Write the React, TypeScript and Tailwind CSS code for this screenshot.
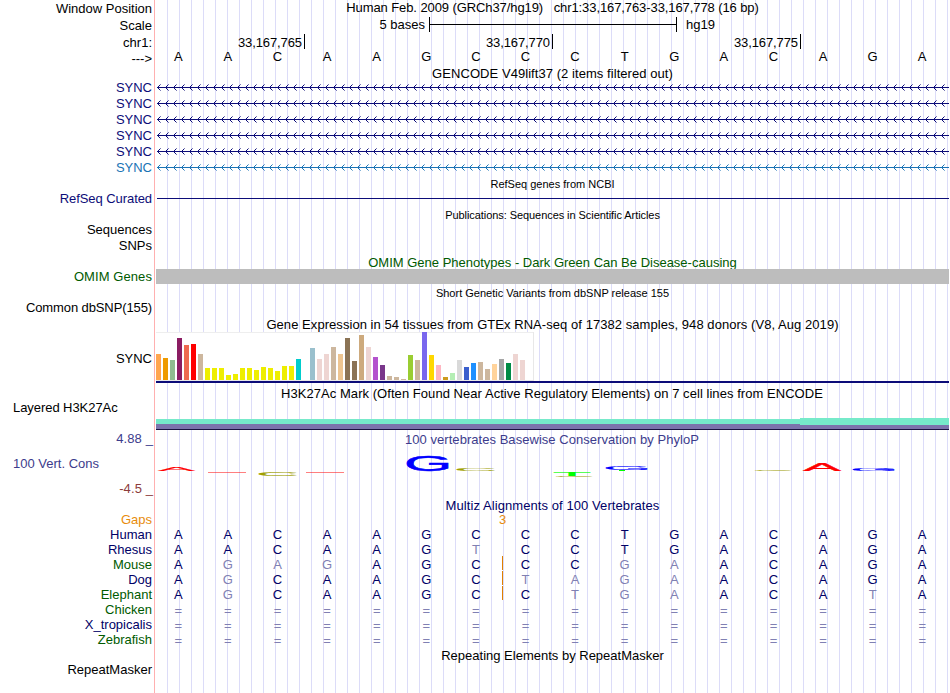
import React from 'react';

const TISSUES: [number, string][] = [
  [26, '#ffa54f'], [22, '#ee9a00'], [20, '#8fbc8f'], [42, '#8b1c62'], [35, '#ee6a50'], [36, '#ff0000'],
  [26, '#cdb79e'], [12, '#eeee00'], [12, '#eeee00'], [12, '#eeee00'], [5, '#eeee00'], [6, '#eeee00'],
  [12, '#eeee00'], [12, '#eeee00'], [10, '#eeee00'], [13, '#eeee00'], [12, '#eeee00'], [9, '#eeee00'],
  [14, '#eeee00'], [14, '#eeee00'], [21, '#00cdcd'], [0, '#ee82ee'], [32, '#9ac0cd'], [21, '#eed5d2'],
  [26, '#eed5d2'], [33, '#cdb79e'], [26, '#eec591'], [42, '#8b7355'], [19, '#8b7355'], [45, '#cdaa7d'],
  [33, '#eed5d2'], [23, '#b452cd'], [15, '#7a378b'], [4, '#cdb79e'], [3, '#cdb79e'], [1, '#cdb79e'],
  [25, '#9acd32'], [20, '#cdb79e'], [48, '#7a67ee'], [25, '#ffd700'], [15, '#ffb6c1'], [3, '#cd9b1d'],
  [7, '#b4eeb4'], [20, '#d9d9d9'], [13, '#3a5fcd'], [17, '#1e90ff'], [18, '#cdb79e'], [11, '#cdb79e'],
  [16, '#ffd39b'], [21, '#a6a6a6'], [17, '#008b45'], [26, '#eed5d2'], [20, '#eed5d2'], [0, '#ff00ff'],
];

// lower case = differs from human, drawn faded
const SPECIES = [
  { name: 'Human', color: 'text-[#000066]', seq: 'AACAAGCCCTGACAGA', gap: false },
  { name: 'Rhesus', color: 'text-[#000066]', seq: 'AACAAGtCCTGACAGA', gap: false },
  { name: 'Mouse', color: 'text-[#005a00]', seq: 'AgagAGCCCgaACAGA', gap: true },
  { name: 'Dog', color: 'text-[#000066]', seq: 'AgCAAGCtagaACAGA', gap: true },
  { name: 'Elephant', color: 'text-[#005a00]', seq: 'AgCAAGCCtgaACAtA', gap: true },
  { name: 'Chicken', color: 'text-[#005a00]', seq: '================', gap: false },
  { name: 'X_tropicalis', color: 'text-[#000066]', seq: '================', gap: false },
  { name: 'Zebrafish', color: 'text-[#005a00]', seq: '================', gap: false },
];

// [letter, left, bottom, width, height, colour], relative to the plot area
const LOGO: [string, number, number, number, number, string][] = [
  ['A', 3, 21, 37, 4, '#ff0000'],
  ['C', 104, 26, 38, 4, '#a0a000'],
  ['G', 252, 21, 41, 16, '#0000ff'],
  ['C', 302, 21, 38, 3, '#a0a000'],
  ['T', 399, 26, 36, 4, '#00ff00'],
  ['C', 401, 27, 37, 1, '#a0a000'],
  ['G', 451, 20, 41, 4, '#0000ff'],
  ['C', 600, 21, 37, 1, '#a0a000'],
  ['A', 648, 21, 38, 7, '#ff0000'],
  ['G', 698, 21, 41, 3, '#0000ff'],
];

// ink box of each letter at font-size 100: left, width
const INK: Record<string, [number, number]> = { A: [0, 66.7], C: [5, 64], G: [5, 66], T: [2, 57] };

function Row({ h, label, labelClass = '', children }: { h: string; label?: string; labelClass?: string; children?: React.ReactNode }) {
  return (
    <div className={`flex shrink-0 ${h}`}>
      <div className={`w-[155px] shrink-0 pr-[3px] text-right whitespace-nowrap ${labelClass}`}>{label}</div>
      <div className="relative min-w-0 flex-1">{children}</div>
    </div>
  );
}

function Title({ children, className = '' }: { children: React.ReactNode; className?: string }) {
  return <div className={`text-center whitespace-pre ${className}`}>{children}</div>;
}

function Bases({ seq, className }: { seq: string; className: string }) {
  return (
    <div className={`-ml-[1.5px] grid w-[793.5px] grid-cols-[repeat(16,minmax(0,1fr))] text-center ${className}`}>
      {seq.split('').map((b, i) => (
        <span key={i} className={b === '=' ? 'pt-px text-[#8080b3]' : b !== b.toUpperCase() ? 'text-[#8080b3]' : ''}>
          {b.toUpperCase()}
        </span>
      ))}
    </div>
  );
}

function Transcript({ id, color }: { id: string; color: string }) {
  return (
    <svg className="ml-px block h-4 w-[793px]" viewBox="0 0 793 16" shapeRendering="crispEdges">
      <defs>
        <pattern id={id} width="8" height="16" patternUnits="userSpaceOnUse">
          <path d="M1 8h1v1h-1z M2 7h1v3h-1z M3 6h1v1h-1z M3 10h1v1h-1z" fill={color} />
          <path d="M4 5h1v1h-1z M4 11h1v1h-1z" fill={color} fillOpacity="0.55" />
        </pattern>
      </defs>
      <rect width="793" height="16" fill={`url(#${id})`} />
      <rect x="1" y="8" width="792" height="1" fill={color} />
    </svg>
  );
}

function Logo() {
  return (
    <svg className="mt-[3px] block h-[32px] w-[795px]" viewBox="0 0 795 32" fontFamily="Liberation Sans, Arial, sans-serif" fontSize="100">
      {LOGO.map(([letter, x, y, w, h, color], i) => {
        const [left, inkWidth] = INK[letter];
        const sx = w / inkWidth;
        return (
          <text key={i} fill={color} stroke={color} strokeWidth="2" transform={`translate(${x - left * sx} ${y}) scale(${sx} ${h / 70})`}>{letter}</text>
        );
      })}
      {/* scores near zero collapse to a hairline */}
      <rect x="53" y="22" width="38" height="1" fill="#ff0000" fillOpacity="0.5" />
      <rect x="151" y="22" width="38" height="1" fill="#ff0000" fillOpacity="0.5" />
      <rect x="464" y="20" width="6" height="1" fill="#00ff00" />
    </svg>
  );
}

export default function App() {
  return (
    <div className="flex h-[693px] w-[950px] flex-col overflow-hidden bg-white bg-[linear-gradient(to_right,#ffffff_154px,#ffb0b0_154px,#ffb0b0_155px,#ffffff_155px,#ffffff_156px,transparent_156px),repeating-linear-gradient(to_right,#ffffff_0px,#ffffff_11px,#dcdcf8_11px,#dcdcf8_12px)] font-['Liberation_Sans',Arial,sans-serif] text-[13px] leading-[15px] text-black">
      <Row h="h-[17px]" label="Window Position" labelClass="pt-px">
        <Title className="tracking-[-0.09px]">{'Human Feb. 2009 (GRCh37/hg19)   chr1:33,167,763-33,167,778 (16 bp)'}</Title>
      </Row>
      <Row h="h-[17px]" label="Scale" labelClass="pt-px">
        <div className="flex">
          <span className="w-[270px] text-right">5 bases</span>
          <div className="ml-[4px] h-[15px] w-[248px] border-x border-black pt-[7px]">
            <div className="h-px bg-black" />
          </div>
          <span className="ml-[9px]">hg19</span>
        </div>
      </Row>
      <Row h="h-[15px]" label="chr1:" labelClass="pt-px">
        <div className="flex h-[15px] text-right tracking-[-0.1px]">
          <span className="w-[150px] border-r border-black pt-px pr-[2px]">33,167,765</span>
          <span className="w-[248px] border-r border-black pt-px pr-[2px]">33,167,770</span>
          <span className="w-[248px] border-r border-black pt-px pr-[2px]">33,167,775</span>
        </div>
      </Row>
      <Row h="h-[17px]" label="--->" labelClass="pt-[2px]">
        <Bases seq="AACAAGCCCTGACAGA" className="" />
      </Row>
      <Row h="h-[13px]">
        <Title className="tracking-[0.06px]">GENCODE V49lift37 (2 items filtered out)</Title>
      </Row>
      {['t1', 't2', 't3', 't4', 't5'].map(id => (
        <Row key={id} h="h-4" label="SYNC" labelClass="pt-px text-[#0c0c78]">
          <Transcript id={id} color="#0c0c78" />
        </Row>
      ))}
      <Row h="h-4" label="SYNC" labelClass="pt-px text-[#1a73b5]">
        <Transcript id="t6" color="#1a73b5" />
      </Row>
      <Row h="h-4">
        <Title className="pt-[2px] text-[11px]">RefSeq genes from NCBI</Title>
      </Row>
      <Row h="h-4" label="RefSeq Curated" labelClass="tracking-[-0.07px] text-[#0c0c78]">
        <div className="pt-[7px] pr-px pl-[2px]">
          <div className="h-px bg-[#0c0c78]" />
        </div>
      </Row>
      <Row h="h-[15px]">
        <Title className="pt-px text-[11px] tracking-[-0.065px]">Publications: Sequences in Scientific Articles</Title>
      </Row>
      <Row h="h-4" label="Sequences" />
      <Row h="h-4" label="SNPs" />
      <Row h="h-[15px]">
        <Title className="pt-px text-[#005a00]">OMIM Gene Phenotypes - Dark Green Can Be Disease-causing</Title>
      </Row>
      <Row h="h-[15px]" label="OMIM Genes" labelClass="tracking-[0.08px] text-[#005a00]">
        <div className="mr-px ml-px h-[15px] bg-[#bdbdbd]" />
      </Row>
      <Row h="h-4">
        <Title className="pt-[2px] text-[11px]">Short Genetic Variants from dbSNP release 155</Title>
      </Row>
      <Row h="h-4" label="Common dbSNP(155)" labelClass="tracking-[-0.11px]" />
      <Row h="h-4">
        <Title className="pt-px tracking-[0.054px]">Gene Expression in 54 tissues from GTEx RNA-seq of 17382 samples, 948 donors (V8, Aug 2019)</Title>
      </Row>
      <Row h="h-[54px]" label="SYNC" labelClass="pt-[19px]">
        <div className="mr-px ml-px">
          <div className="flex h-[49px] w-[378px] items-end gap-[2px] border-r border-b border-[#e8e8e8] bg-white shadow-[inset_0_1px_0_#eeeeee]">
            {TISSUES.map(([height, color], i) => (
              <div key={i} className="w-[5px] shrink-0" style={{ height, backgroundColor: color }} />
            ))}
          </div>
          <div className="h-[2px] bg-[#0c0c78]" />
        </div>
      </Row>
      <Row h="h-[14px]">
        <Title className="pr-px tracking-[0.05px]">H3K27Ac Mark (Often Found Near Active Regulatory Elements) on 7 cell lines from ENCODE</Title>
      </Row>
      <div className="flex h-[32px] shrink-0">
        <div className="w-[156px] shrink-0 pl-[13px] tracking-[-0.06px]">Layered H3K27Ac</div>
        <div className="flex w-[793px] flex-col justify-end pb-[2px]">
          <div className="flex items-end">
            <div className="flex h-[11px] w-[644px] flex-col">
              <div className="h-[5px] bg-[#76eaca]" />
              <div className="flex-1 bg-[#7c74ac]" />
            </div>
            <div className="flex h-[12px] flex-1 flex-col">
              <div className="h-[7px] bg-[#76eaca]" />
              <div className="flex-1 bg-[#7c74ac]" />
            </div>
          </div>
          <div className="-mt-px h-px bg-[#1a1440]" />
        </div>
      </div>
      <div className="flex h-[66px] shrink-0 text-[#3c3c8c]">
        <div className="-mt-px flex w-[155px] shrink-0 flex-col gap-[10px] pr-[2px] text-right">
          <div className="tracking-[0.1px]">4.88 _</div>
          <div className="pl-[13px] text-left">100 Vert. Cons</div>
          <div className="tracking-[0.1px] text-[#8c3c3c]">-4.5 _</div>
        </div>
        <div className="flex-1">
          <Title className="pr-px tracking-[0.04px]">100 vertebrates Basewise Conservation by PhyloP</Title>
          <Logo />
        </div>
      </div>
      <Row h="h-[14px]">
        <Title className="tracking-[0.08px] text-[#000066]">Multiz Alignments of 100 Vertebrates</Title>
      </Row>
      <Row h="h-[15px]" label="Gaps" labelClass="text-[#e88c0c]">
        <div className="pl-[344px] text-[#e88c0c]">3</div>
      </Row>
      {SPECIES.map(s => (
        <Row key={s.name} h="h-[15px]" label={s.name} labelClass={s.color}>
          <Bases seq={s.seq} className="text-[#000066]" />
          {s.gap && <div className="absolute top-[-1px] left-[347px] h-[14px] w-px bg-[#e08000]" />}
        </Row>
      ))}
      <Row h="h-[15px]">
        <Title className="pt-px">Repeating Elements by RepeatMasker</Title>
      </Row>
      <Row h="h-[31px]" label="RepeatMasker" />
    </div>
  );
}
